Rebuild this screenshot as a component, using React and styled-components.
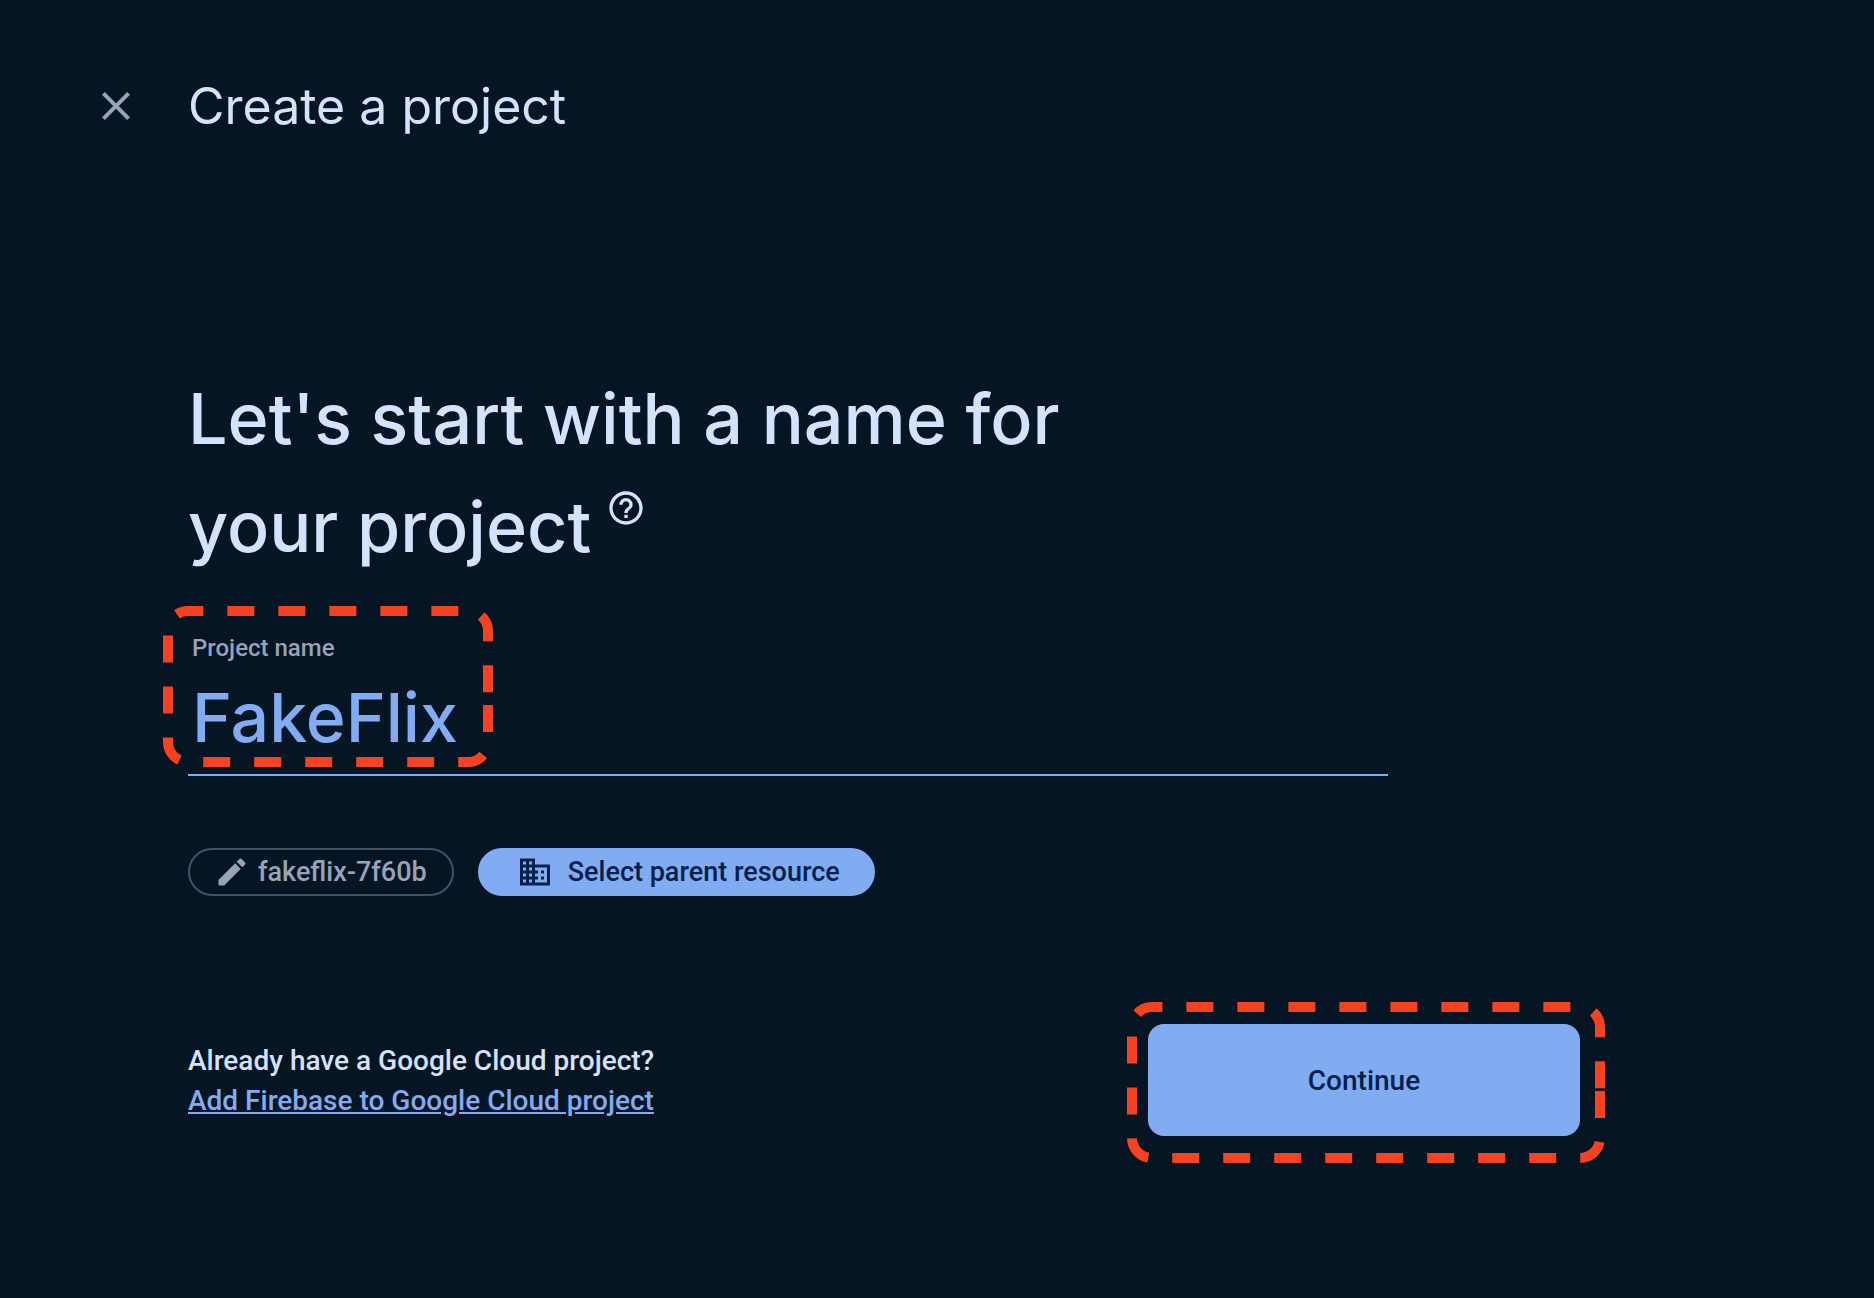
import React from "react";
import styled, { createGlobalStyle } from "styled-components";

const color = {
  page: "#051524",
  text: "#d5e2fd",
  muted: "#96a3b9",
  outline: "#435165",
  primary: "#81acf2",
  onPrimary: "#03204b",
  marker: "#f54321",
};

const GlobalStyle = createGlobalStyle`
  * { box-sizing: border-box; }
  html, body { margin: 0; background: ${color.page}; }
  body {
    font-family: Roboto, "Liberation Sans", sans-serif;
    font-weight: 500;
    color: ${color.text};
  }
  button, input { font: inherit; }
`;

const display = `font-family: Inter, Roboto, sans-serif;`;

const Page = styled.div`
  min-height: 100vh;
  padding: 72px 92px;
`;

const Header = styled.header`
  display: flex;
  align-items: center;
  gap: 48px;
`;

const CloseButton = styled.button`
  display: flex;
  padding: 0;
  border: 0;
  background: none;
  color: ${color.muted};
  cursor: pointer;
`;

const Title = styled.h1`
  ${display}
  margin: 0;
  font-size: 50px;
  font-weight: 400;
  line-height: 68px;
`;

const Form = styled.form`
  max-width: 1488px;
  margin: 225px 0 0;
  padding: 0 0 0 96px;
`;

const Question = styled.h2`
  ${display}
  max-width: 1000px;
  margin: 0;
  font-size: 70px;
  font-weight: 500;
  line-height: 108px;
`;

const HelpButton = styled.button`
  display: inline-flex;
  margin: 0 0 0 15px;
  padding: 0;
  border: 0;
  background: none;
  color: inherit;
  vertical-align: 24px;
  cursor: pointer;
`;

const Field = styled.div`
  position: relative;
  display: flex;
  flex-direction: column;
  max-width: 1200px;
  margin-top: 51px;
  padding: 0 4px;
  border-bottom: 2px solid ${color.primary};
`;

const Label = styled.label`
  color: ${color.muted};
  font-size: 24px;
  line-height: 32px;
`;

const NameInput = styled.input`
  ${display}
  width: 100%;
  height: 110px;
  padding: 0 0 4px;
  border: 0;
  outline: 0;
  background: none;
  color: ${color.primary};
  font-size: 68px;
`;

const Chips = styled.div`
  display: flex;
  flex-wrap: wrap;
  gap: 24px;
  margin-top: 72px;
`;

const Chip = styled.button`
  display: flex;
  align-items: center;
  gap: ${(p) => (p.$filled ? 15 : 8)}px;
  height: 48px;
  padding: ${(p) => (p.$filled ? "0 33px 0 37px" : "0 25px 0 24px")};
  border: 2px solid ${(p) => (p.$filled ? color.primary : color.outline)};
  border-radius: 24px;
  background: ${(p) => (p.$filled ? color.primary : "transparent")};
  color: ${(p) => (p.$filled ? color.onPrimary : color.muted)};
  font-size: 27px;
  white-space: nowrap;
  cursor: pointer;
`;

const Footer = styled.div`
  display: flex;
  flex-wrap: wrap;
  align-items: center;
  justify-content: space-between;
  gap: 32px;
  margin-top: 128px;
`;

const Existing = styled.p`
  display: flex;
  flex-direction: column;
  align-items: flex-start;
  margin: 0;
  padding-top: 2px;
  font-size: 28px;
  line-height: 40px;
`;

const Link = styled.a`
  color: ${color.primary};
  text-decoration: underline;
`;

const ContinueWrap = styled.div`
  position: relative;
`;

const ContinueButton = styled.button`
  width: 432px;
  height: 112px;
  border: 0;
  border-radius: 16px;
  background: ${color.primary};
  color: ${color.onPrimary};
  font-size: 28px;
  cursor: pointer;
`;

const Marker = styled.svg`
  position: absolute;
  top: ${(p) => p.$top}px;
  left: ${(p) => p.$left}px;
  pointer-events: none;
`;

function Icon({ size, d }) {
  return (
    <svg width={size} height={size} viewBox="0 0 24 24" fill="currentColor" aria-hidden="true">
      <path d={d} />
    </svg>
  );
}

const icons = {
  close:
    "M19 6.41 17.59 5 12 10.59 6.41 5 5 6.41 10.59 12 5 17.59 6.41 19 12 13.41 17.59 19 19 17.59 13.41 12z",
  help:
    "M11 18h2v-2h-2v2zm1-16C6.48 2 2 6.48 2 12s4.48 10 10 10 10-4.48 10-10S17.52 2 12 2zm0 18c-4.41 0-8-3.59-8-8s3.59-8 8-8 8 3.59 8 8-3.59 8-8 8zm0-14c-2.21 0-4 1.79-4 4h2c0-1.1.9-2 2-2s2 .9 2 2c0 2-3 1.75-3 5h2c0-2.25 3-2.5 3-5 0-2.21-1.79-4-4-4z",
  edit:
    "M3 17.25V21h3.75L17.81 9.94l-3.75-3.75L3 17.25zM20.71 7.04c.39-.39.39-1.02 0-1.41l-2.34-2.34c-.39-.39-1.02-.39-1.41 0l-1.83 1.83 3.75 3.75 1.83-1.83z",
  domain:
    "M12 7V3H2v18h20V7H12zM6 19H4v-2h2v2zm0-4H4v-2h2v2zm0-4H4V9h2v2zm0-4H4V5h2v2zm4 12H8v-2h2v2zm0-4H8v-2h2v2zm0-4H8V9h2v2zm0-4H8V5h2v2zm10 12h-8v-2h2v-2h-2v-2h2v-2h-2V9h8v10zm-2-8h-2v2h2v-2zm0 4h-2v2h2v-2z",
};

/* Dashed rounded outline; the dash pattern begins on the right edge at `start`. */
function DashedMarker({ top, left, width, height, start }) {
  const w = width - 5;
  const h = height - 5;
  const r = 20;
  const d = [
    `M${w} ${start}V${h - r}`,
    `A${r} ${r} 0 0 1 ${w - r} ${h}H${5 + r}`,
    `A${r} ${r} 0 0 1 5 ${h - r}V${5 + r}`,
    `A${r} ${r} 0 0 1 ${5 + r} 5H${w - r}`,
    `A${r} ${r} 0 0 1 ${w} ${5 + r}V${start}`,
  ].join("");
  return (
    <Marker $top={top} $left={left} width={width} height={height} aria-hidden="true">
      <path d={d} fill="none" stroke={color.marker} strokeWidth="10" strokeDasharray="27 24" />
    </Marker>
  );
}

export default function App() {
  return (
    <>
      <GlobalStyle />
      <Page>
        <Header>
          <CloseButton type="button" aria-label="Close">
            <Icon size={48} d={icons.close} />
          </CloseButton>
          <Title>Create a project</Title>
        </Header>
        <Form onSubmit={(e) => e.preventDefault()}>
          <Question>
            Let's start with a name for your project
            <HelpButton type="button" aria-label="Help">
              <Icon size={40} d={icons.help} />
            </HelpButton>
          </Question>
          <Field>
            <Label htmlFor="project-name">Project name</Label>
            <NameInput id="project-name" type="text" defaultValue="FakeFlix" />
            <DashedMarker top={-26} left={-25} width={330} height={161} start={99} />
          </Field>
          <Chips>
            <Chip type="button">
              <Icon size={36} d={icons.edit} />
              fakeflix-7f60b
            </Chip>
            <Chip type="button" $filled>
              <Icon size={36} d={icons.domain} />
              Select parent resource
            </Chip>
          </Chips>
          <Footer>
            <Existing>
              <span>Already have a Google Cloud project?</span>
              <Link href="#add-firebase">Add Firebase to Google Cloud project</Link>
            </Existing>
            <ContinueWrap>
              <ContinueButton type="submit">Continue</ContinueButton>
              <DashedMarker top={-22} left={-21} width={478} height={161} start={89} />
            </ContinueWrap>
          </Footer>
        </Form>
      </Page>
    </>
  );
}
